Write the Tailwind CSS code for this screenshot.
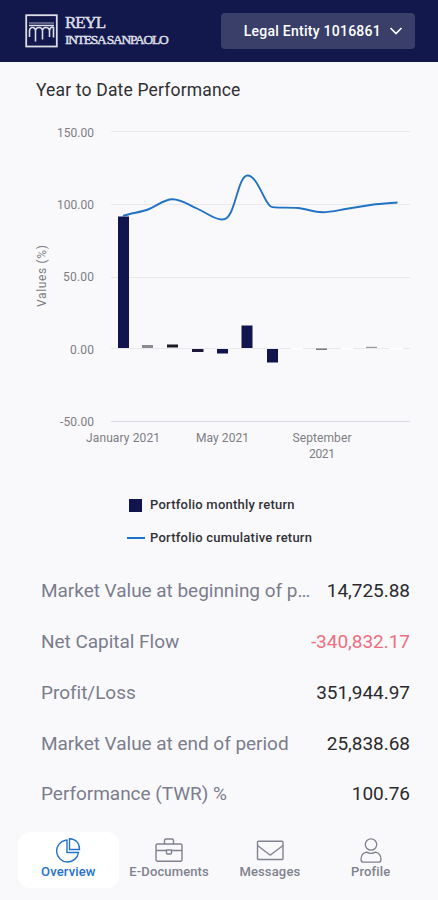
<!DOCTYPE html>
<html lang="en">

<head>
  <meta charset="UTF-8" />
  <meta name="viewport" content="width=device-width, initial-scale=1.0" />
  <title>Year to Date Performance</title>
  <script src="https://cdn.jsdelivr.net/npm/@tailwindcss/browser@4"></script>
</head>

<body class="bg-[#f9f9fc] font-[Roboto,sans-serif]">
  <div class="flex h-[900px] w-[438px] flex-col overflow-hidden">

    <!-- Header -->
    <header class="flex h-[62px] shrink-0 items-center justify-between bg-[#12184b] pl-[25px] pr-[23px]">
      <div class="flex items-center gap-[7px] text-[#dcdde6]">
        <svg class="h-[34px] w-[33px]" viewBox="0 0 33 34" fill="none" stroke="currentColor">
          <rect x="1.2" y="1.2" width="30.6" height="31.3" stroke-width="1.8" />
          <path d="M4 9h25" stroke-width="1" opacity=".75" />
          <path d="M4 11.500h25" stroke-width="1.5" />
          <path d="M4.500 23v-6.500c.5-4 5.500-4 6 0v11M10.500 16.500c.5-4 6.500-4 7 0v9M17.500 16.500c.5-4 6.500-4 7 0v6.500M24.500 16.500c.3-3 2.500-4 4-3v10" stroke-width="1.600" />
        </svg>
        <div class="flex w-[106px] flex-col font-['Liberation_Serif',serif]">
          <span class="text-[17px] leading-[17px] tracking-[-1.1px] [-webkit-text-stroke:0.5px_currentColor]">REYL</span>
          <span class="whitespace-nowrap text-[13.5px] leading-[17px] tracking-[-1.26px] [-webkit-text-stroke:0.5px_currentColor]">INTESA SANPAOLO</span>
        </div>
      </div>
      <button class="flex h-9 w-[194px] items-center justify-end gap-2 rounded bg-[#3a3f6a] pr-3 text-[14px] font-medium text-white">
        <span class="whitespace-nowrap tracking-[0.25px]">Legal Entity 1016861</span>
        <svg class="h-[14px] w-[14px]" viewBox="0 0 14 14" fill="none" stroke="currentColor" stroke-width="1.6">
          <path d="M1.500 4 7 9.500 12.500 4" />
        </svg>
      </button>
    </header>

    <h1 class="mt-[14px] h-[26px] shrink-0 pl-9 text-[17.5px] leading-[28px] tracking-[0.17px] text-[#303033]">Year to Date Performance</h1>

    <!-- Chart -->
    <svg class="h-[368px] w-[438px] shrink-0" viewBox="0 102 438 368" font-size="12" fill="#7d7d82">
      <g stroke="#e9e9ed">
        <path d="M111 131.500H410M111 204.500H410M111 277.500H410M111 348.500H410" />
        <path d="M111 421.500H410" stroke="#d9dbe8" />
      </g>
      <g text-anchor="end">
        <text x="94" y="137" textLength="37">150.00</text>
        <text x="94" y="208.500" textLength="37">100.00</text>
        <text x="94" y="281" textLength="31">50.00</text>
        <text x="94" y="353.500" textLength="24">0.00</text>
        <text x="94" y="426" textLength="34">-50.00</text>
      </g>
      <text transform="translate(45.500 276) rotate(-90)" text-anchor="middle" textLength="62">Values (%)</text>
      <g text-anchor="middle">
        <text x="123" y="441.500" textLength="74">January 2021</text>
        <text x="222.500" y="441.500" textLength="53">May 2021</text>
        <text x="322" y="441.500" textLength="59">September</text>
        <text x="322" y="457.500" textLength="26">2021</text>
      </g>
      <!-- Monthly return -->
      <g fill="#12144d">
        <rect x="118" y="216.500" width="11" height="131.500" />
        <rect x="142" y="345" width="11" height="3" fill="#8b8b92" />
        <rect x="167" y="344.500" width="11" height="3" fill="#1c1a24" />
        <rect x="192" y="349" width="11.500" height="3" fill="#1c1838" />
        <rect x="217" y="349" width="11" height="4.500" />
        <rect x="241.500" y="325.500" width="11" height="22.500" />
        <rect x="267" y="349" width="11" height="13.500" />
        <rect x="316" y="348.500" width="11" height="1.500" fill="#77777c" />
        <rect x="366" y="346.800" width="11" height="1.200" fill="#9a9a9f" />
      </g>
      <rect x="291" y="348" width="12" height="1.500" fill="#fff" />
      <rect x="341" y="348" width="12" height="1.500" fill="#fff" />
      <rect x="390" y="348" width="13" height="1.500" fill="#fff" />
      <!-- Cumulative return -->
      <path d="M123 216C131 213 140 212.500 148 209.500C156 206.500 164 199.300 172.500 199.300C181 199.300 189 205 197 208.500C207 213 214 219.500 222 219.500C226 219.500 228 218 231 212C237 199 240 175.500 247.500 175.500C256 175.500 262 195 268 203.500C270 206.500 271 207.300 275 207.400C283 207.800 290 207.300 298 208C306 208.700 314 212.200 322.500 212.200C331 212.200 339 210 347 208.800C356 207.300 364 206 372 204.800C380 203.700 389 203.200 397.500 202.500" fill="none" stroke="#2272c4" stroke-width="1.900" />
    </svg>

    <!-- Legend -->
    <div class="flex h-[96px] shrink-0 flex-col gap-[13px] pt-[25px] text-[13px] font-medium leading-[20px] text-[#323236]">
      <div class="flex items-center pl-[129px]">
        <span class="h-[13px] w-[13px] bg-[#12144d]"></span>
        <span class="ml-2 tracking-[0.23px]">Portfolio monthly return</span>
      </div>
      <div class="flex items-center pl-[127px]">
        <span class="h-[2px] w-[18px] bg-[#1b74cb]"></span>
        <span class="ml-[5px] tracking-[0.23px]">Portfolio cumulative return</span>
      </div>
    </div>

    <!-- Figures -->
    <dl class="flex h-[254px] shrink-0 flex-col pl-[41px] pr-7 text-[19px] tracking-[-0.03px] text-[#7b7d8d]">
      <div class="flex flex-1 items-center justify-between">
        <dt class="whitespace-nowrap">Market Value at beginning of p…</dt>
        <dd class="text-[#2b2b2e]">14,725.88</dd>
      </div>
      <div class="flex flex-1 items-center justify-between">
        <dt>Net Capital Flow</dt>
        <dd class="text-[#ee6f7f]">-340,832.17</dd>
      </div>
      <div class="flex flex-1 items-center justify-between">
        <dt>Profit/Loss</dt>
        <dd class="text-[#2b2b2e]">351,944.97</dd>
      </div>
      <div class="flex flex-1 items-center justify-between">
        <dt>Market Value at end of period</dt>
        <dd class="text-[#2b2b2e]">25,838.68</dd>
      </div>
      <div class="flex flex-1 items-center justify-between">
        <dt>Performance (TWR) %</dt>
        <dd class="text-[#2b2b2e]">100.76</dd>
      </div>
    </dl>

    <!-- Bottom navigation -->
    <nav class="mt-3 grid h-14 shrink-0 grid-cols-4 pl-[18px] pr-[17px] text-[13px] font-medium leading-4 text-[#80828e]">
      <a class="flex flex-col items-center rounded-xl bg-white pt-[5px] text-[#2472cc]">
        <svg class="h-[27px] w-[28px]" viewBox="0 0 28 27" fill="none" stroke="currentColor" stroke-width="1.400">
          <path d="M11.500 3.200A11 11 0 1 0 24.500 15.500H13V3Z" />
          <path d="M15.500 1.800v10.700h10C25.500 6 21.500 2 15.500 1.800Z" />
        </svg>
        <span class="tracking-[0.15px]">Overview</span>
      </a>
      <a class="flex flex-col items-center pt-[5px]">
        <svg class="h-[27px] w-[28px]" viewBox="0 0 28 27" fill="none" stroke="currentColor" stroke-width="1.400">
          <rect x="1" y="7" width="26" height="17.300" rx="1.500" />
          <path d="M9.500 7V3.500q0-1.500 1.500-1.500h6q1.500 0 1.500 1.500V7M1 13.500h10.500M16.500 13.500H27M11.500 13h5v3q0 1-1 1h-3q-1 0-1-1Z" />
        </svg>
        <span class="tracking-[0.12px]">E-Documents</span>
      </a>
      <a class="flex flex-col items-center pt-[5px]">
        <svg class="h-[27px] w-[28px]" viewBox="0 0 28 27" fill="none" stroke="currentColor" stroke-width="1.400">
          <rect x="1.500" y="4.200" width="25.500" height="18.300" rx="1" />
          <path d="M1.500 8.500l11.500 8.800q1.200.8 2.400 0L27 8.500" />
        </svg>
        <span class="tracking-[0.15px]">Messages</span>
      </a>
      <a class="flex flex-col items-center pt-[5px]">
        <svg class="h-[27px] w-[28px]" viewBox="0 0 28 27" fill="none" stroke="currentColor" stroke-width="1.300">
          <circle cx="14" cy="7.500" r="5.700" />
          <path d="M9.500 15.200C6 16 4 19 4 22.500Q4 25.200 6.500 25.200H21.500Q24 25.200 24 22.500C24 19 22 16 18.500 15.200Q14 17.500 9.500 15.200Z" />
        </svg>
        <span class="tracking-[0.15px]">Profile</span>
      </a>
    </nav>
  </div>
</body>

</html>
